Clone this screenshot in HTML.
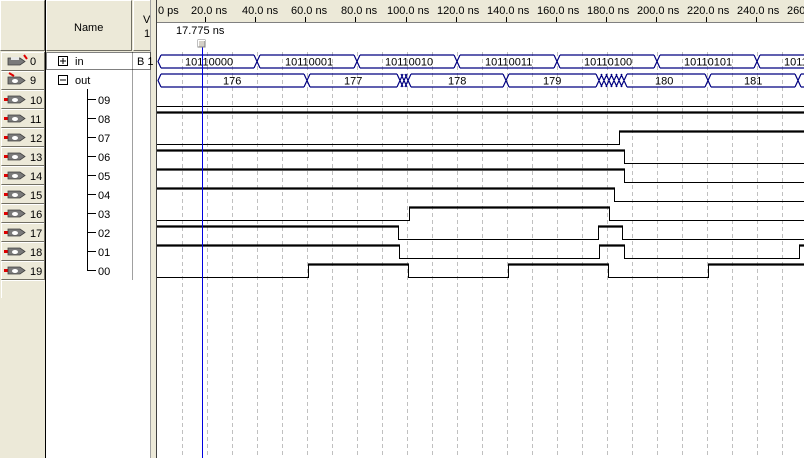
<!DOCTYPE html>
<html><head><meta charset="utf-8"><style>
html,body{margin:0;padding:0;width:804px;height:458px;overflow:hidden;background:#fff;font-family:"Liberation Sans",sans-serif;font-size:11px}
svg{position:absolute;left:0;top:0}
text{font-family:"Liberation Sans",sans-serif;font-size:11px;fill:#000}
</style></head><body>
<svg width="804" height="458" viewBox="0 0 804 458" xmlns="http://www.w3.org/2000/svg">
<rect x="0" y="0" width="157" height="458" fill="#ece9d8"/>
<rect x="46" y="52" width="105" height="406" fill="#fff"/>
<g stroke-width="1" fill="none">
<path d="M0.5 50.5V0.5H44.5" stroke="#fff"/><path d="M0.5 50.5H44.5V0.5" stroke="#716f64"/>
<path d="M46.5 50.5V0.5H131.5" stroke="#fff"/><path d="M46.5 50.5H131.5V0.5" stroke="#716f64"/>
<path d="M133.5 50.5V0.5H150" stroke="#fff"/><path d="M133.5 50.5H150" stroke="#716f64"/>
</g>
<text x="74" y="31">Name</text>
<text x="143" y="23">V</text><text x="144" y="37">1</text>
<line x1="45.5" y1="0" x2="45.5" y2="458" stroke="#000"/>
<line x1="150.5" y1="0" x2="150.5" y2="458" stroke="#a0a0a0"/>
<line x1="156.5" y1="0" x2="156.5" y2="458" stroke="#404040"/>
<line x1="132.5" y1="52" x2="132.5" y2="280" stroke="#a0a0a0"/>
<g fill="none" stroke-width="1">
<path d="M1.5 70V52.5H44M1.5 89V71.5H44M1.5 108V90.5H44M1.5 127V109.5H44M1.5 146V128.5H44M1.5 165V147.5H44M1.5 184V166.5H44M1.5 203V185.5H44M1.5 222V204.5H44M1.5 241V223.5H44M1.5 260V242.5H44M1.5 279V261.5H44M1.5 298V280.5H44" stroke="#fff"/>
<path d="M1.5 70.5H44.5V52M1.5 89.5H44.5V71M1.5 108.5H44.5V90M1.5 127.5H44.5V109M1.5 146.5H44.5V128M1.5 165.5H44.5V147M1.5 184.5H44.5V166M1.5 203.5H44.5V185M1.5 222.5H44.5V204M1.5 241.5H44.5V223M1.5 260.5H44.5V242M1.5 279.5H44.5V261" stroke="#716f64"/>
</g>
<g>
<g transform="translate(0,52)"><path d="M8 6H20L25 9.5L20 13H8Z" fill="#7a7a7a" stroke="#404040" stroke-width="0.8"/><rect x="11" y="5" width="8" height="3" fill="#e8e8e8"/><path d="M24 3L27 7" stroke="#e00000" stroke-width="2"/><text x="30" y="13">0</text></g>
<g transform="translate(0,71)"><path d="M8 6H20L25 9.5L20 13H8Z" fill="#7a7a7a" stroke="#404040" stroke-width="0.8"/><ellipse cx="15" cy="10" rx="3" ry="2" fill="#fff"/><path d="M9 2L14 5" stroke="#e00000" stroke-width="2"/><text x="30" y="13">9</text></g>
</g>
<g>
<g transform="translate(0,90)"><rect x="4" y="8" width="4" height="3" fill="#e00000"/><path d="M8 6H20L25 9.5L20 13H8Z" fill="#7a7a7a" stroke="#404040" stroke-width="0.8"/><ellipse cx="15" cy="10" rx="3" ry="2" fill="#fff"/><text x="30" y="14">10</text></g>
<g transform="translate(0,109)"><rect x="4" y="8" width="4" height="3" fill="#e00000"/><path d="M8 6H20L25 9.5L20 13H8Z" fill="#7a7a7a" stroke="#404040" stroke-width="0.8"/><ellipse cx="15" cy="10" rx="3" ry="2" fill="#fff"/><text x="30" y="14">11</text></g>
<g transform="translate(0,128)"><rect x="4" y="8" width="4" height="3" fill="#e00000"/><path d="M8 6H20L25 9.5L20 13H8Z" fill="#7a7a7a" stroke="#404040" stroke-width="0.8"/><ellipse cx="15" cy="10" rx="3" ry="2" fill="#fff"/><text x="30" y="14">12</text></g>
<g transform="translate(0,147)"><rect x="4" y="8" width="4" height="3" fill="#e00000"/><path d="M8 6H20L25 9.5L20 13H8Z" fill="#7a7a7a" stroke="#404040" stroke-width="0.8"/><ellipse cx="15" cy="10" rx="3" ry="2" fill="#fff"/><text x="30" y="14">13</text></g>
<g transform="translate(0,166)"><rect x="4" y="8" width="4" height="3" fill="#e00000"/><path d="M8 6H20L25 9.5L20 13H8Z" fill="#7a7a7a" stroke="#404040" stroke-width="0.8"/><ellipse cx="15" cy="10" rx="3" ry="2" fill="#fff"/><text x="30" y="14">14</text></g>
<g transform="translate(0,185)"><rect x="4" y="8" width="4" height="3" fill="#e00000"/><path d="M8 6H20L25 9.5L20 13H8Z" fill="#7a7a7a" stroke="#404040" stroke-width="0.8"/><ellipse cx="15" cy="10" rx="3" ry="2" fill="#fff"/><text x="30" y="14">15</text></g>
<g transform="translate(0,204)"><rect x="4" y="8" width="4" height="3" fill="#e00000"/><path d="M8 6H20L25 9.5L20 13H8Z" fill="#7a7a7a" stroke="#404040" stroke-width="0.8"/><ellipse cx="15" cy="10" rx="3" ry="2" fill="#fff"/><text x="30" y="14">16</text></g>
<g transform="translate(0,223)"><rect x="4" y="8" width="4" height="3" fill="#e00000"/><path d="M8 6H20L25 9.5L20 13H8Z" fill="#7a7a7a" stroke="#404040" stroke-width="0.8"/><ellipse cx="15" cy="10" rx="3" ry="2" fill="#fff"/><text x="30" y="14">17</text></g>
<g transform="translate(0,242)"><rect x="4" y="8" width="4" height="3" fill="#e00000"/><path d="M8 6H20L25 9.5L20 13H8Z" fill="#7a7a7a" stroke="#404040" stroke-width="0.8"/><ellipse cx="15" cy="10" rx="3" ry="2" fill="#fff"/><text x="30" y="14">18</text></g>
<g transform="translate(0,261)"><rect x="4" y="8" width="4" height="3" fill="#e00000"/><path d="M8 6H20L25 9.5L20 13H8Z" fill="#7a7a7a" stroke="#404040" stroke-width="0.8"/><ellipse cx="15" cy="10" rx="3" ry="2" fill="#fff"/><text x="30" y="14">19</text></g>
</g>
<rect x="46.5" y="52.5" width="104" height="17" fill="none" stroke="#000" stroke-dasharray="1,1"/>
<rect x="58.5" y="56.5" width="9" height="9" fill="#fff" stroke="#000"/><path d="M60 61H66M63 58V64" stroke="#000"/>
<text x="75" y="65">in</text><text x="137" y="65">B 1</text>
<rect x="58.5" y="75.5" width="9" height="9" fill="#fff" stroke="#000"/><path d="M60 80H66" stroke="#000"/>
<text x="75" y="84">out</text>
<path d="M87.5 89V270.5H96M87.5 99.5H96M87.5 118.5H96M87.5 137.5H96M87.5 156.5H96M87.5 175.5H96M87.5 194.5H96M87.5 213.5H96M87.5 232.5H96M87.5 251.5H96" stroke="#000" fill="none"/>
<g><text x="98" y="104">09</text><text x="98" y="123">08</text><text x="98" y="142">07</text><text x="98" y="161">06</text><text x="98" y="180">05</text><text x="98" y="199">04</text><text x="98" y="218">03</text><text x="98" y="237">02</text><text x="98" y="256">01</text><text x="98" y="275">00</text></g>

<rect x="157" y="0" width="647" height="22" fill="#ece9d8"/>
<line x1="157" y1="22.5" x2="804" y2="22.5" stroke="#808080"/>
<rect x="157" y="23" width="647" height="435" fill="#fff"/>
<g>
<text x="158" y="14">0 ps</text>
<text x="191" y="14">20.0 ns</text><text x="242" y="14">40.0 ns</text><text x="291" y="14">60.0 ns</text><text x="341" y="14">80.0 ns</text><text x="387" y="14">100.0 ns</text><text x="437" y="14">120.0 ns</text><text x="487" y="14">140.0 ns</text><text x="537" y="14">160.0 ns</text><text x="587" y="14">180.0 ns</text><text x="637" y="14">200.0 ns</text><text x="687" y="14">220.0 ns</text><text x="737" y="14">240.0 ns</text><text x="787" y="14">260.0 ns</text>
<path d="M205.5 17V22M255.5 17V22M305.5 17V22M355.5 17V22M406.5 17V22M456.5 17V22M506.5 17V22M556.5 17V22M606.5 17V22M656.5 17V22M706.5 17V22M756.5 17V22" stroke="#000"/>
</g>
<path d="M182.5 52V458M207.5 52V458M232.5 52V458M257.5 52V458M282.5 52V458M307.5 52V458M332.5 52V458M357.5 52V458M382.5 52V458M407.5 52V458M432.5 52V458M457.5 52V458M482.5 52V458M507.5 52V458M532.5 52V458M557.5 52V458M582.5 52V458M607.5 52V458M632.5 52V458M657.5 52V458M682.5 52V458M707.5 52V458M732.5 52V458M757.5 52V458M782.5 52V458" stroke="#c0c0c0" stroke-dasharray="4,3"/>
<g fill="none" stroke="#000080" stroke-width="1.2">
<path d="M161 55H254M161 68H254M161 55L158 61.5L161 68"/>
<path d="M254 55L260 68M254 68L260 55M260 55H354M260 68H354"/>
<path d="M354 55L360 68M354 68L360 55M360 55H454M360 68H454"/>
<path d="M454 55L460 68M454 68L460 55M460 55H554M460 68H554"/>
<path d="M554 55L560 68M554 68L560 55M560 55H654M560 68H654"/>
<path d="M654 55L660 68M654 68L660 55M660 55H754M660 68H754"/>
<path d="M754 55L760 68M754 68L760 55M760 55H804M760 68H804"/>
<path d="M161 74H304M161 87H304M161 74L158 80.5L161 87"/>
<path d="M304 74L310 87M304 87L310 74M310 74H397M310 87H397"/>
<path d="M397 74L403 87M397 87L403 74M401 74L407 87M401 87L407 74M405 74L411 87M405 87L411 74"/>
<path d="M411 74H503M411 87H503M503 74L509 87M503 87L509 74M509 74H596M509 87H596"/>
<path d="M596 74L602 87M596 87L602 74M601 74L607 87M601 87L607 74M606 74L612 87M606 87L612 74M611 74L617 87M611 87L617 74M616 74L622 87M616 87L622 74M621 74L627 87M621 87L627 74"/>
<path d="M627 74H705M627 87H705M705 74L711 87M705 87L711 74M711 74H795M711 87H795M795 74L801 87M795 87L801 74M801 74H804M801 87H804"/>
</g>
<g><text x="185" y="65.5">10110000</text><text x="285" y="65.5">10110001</text><text x="385" y="65.5">10110010</text><text x="485" y="65.5">10110011</text><text x="584" y="65.5">10110100</text><text x="684" y="65.5">10110101</text><text x="784" y="65.5">1011</text>
<text x="223" y="84.5">176</text><text x="344" y="84.5">177</text><text x="448" y="84.5">178</text><text x="543" y="84.5">179</text><text x="655" y="84.5">180</text><text x="744" y="84.5">181</text></g>
<g fill="none" stroke="#000" stroke-width="1">
<path d="M157 106.5H804"/>
<path d="M157 144.5H619.5V131.5"/>
<path d="M624.5 150.5V163.5H804"/>
<path d="M624.5 169.5V182.5H804"/>
<path d="M614.5 188.5V201.5H804"/>
<path d="M157 220.5H409.5V207.5M609.5 207.5V220.5H804"/>
<path d="M398.5 226.5V239.5H598.5V226.5M622.5 226.5V239.5H804"/>
<path d="M399.5 245.5V258.5H599.5V245.5M624.5 245.5V258.5H799.5V245.5"/>
<path d="M157 277.5H308.5V264.5M408.5 264.5V277.5H508.5V264.5M608.5 264.5V277.5H708.5V264.5"/>
</g>
<g fill="none" stroke="#000" stroke-width="2.2">
<path d="M157 112.5H804"/>
<path d="M619 131.5H804"/>
<path d="M157 150.5H625"/>
<path d="M157 169.5H625"/>
<path d="M157 188.5H615"/>
<path d="M409 207.5H610"/>
<path d="M157 226.5H399M598 226.5H623"/>
<path d="M157 245.5H400M599 245.5H625M799 245.5H804"/>
<path d="M308 264.5H409M508 264.5H609M708 264.5H804"/>
</g>
<text x="176" y="34">17.775 ns</text>
<line x1="202.5" y1="46" x2="202.5" y2="458" stroke="#0000e0" stroke-width="1"/>
<rect x="198" y="40" width="7" height="7" fill="#d4d0c8" stroke="#808080" stroke-width="1"/>
<path d="M198.5 46.5V40.5H205" stroke="#fff" fill="none"/>
</svg>
</body></html>
